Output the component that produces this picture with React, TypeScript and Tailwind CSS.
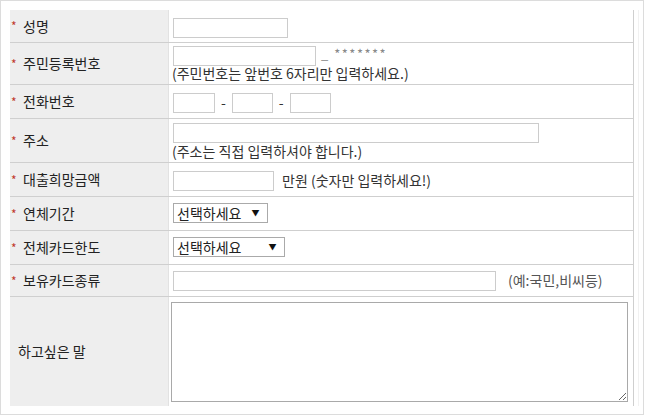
import React from "react"

const font = { fontFamily: '"Noto Sans CJK KR", "Noto Sans", sans-serif' }

type RowProps = {
  label: string
  required?: boolean
  h: string
  children: React.ReactNode
  last?: boolean
}

function Row({ label, required = true, h, children, last }: RowProps) {
  return (
    <div className={`flex ${h} ${last ? "" : "border-b border-[#cfcfcf]"}`}>
      <div className="w-[159px] shrink-0 bg-[#eeeeee] border-r border-[#e2e2e2] flex items-center pl-[1px] text-[14px] text-[#222]">
        {required ? (
          <span className="w-[6px] text-[#c0392b] text-[12px] leading-none">*</span>
        ) : (
          <span className="w-[7px]" />
        )}
        <span className={required ? "ml-[6px]" : ""}>{label}</span>
      </div>
      <div className="flex-1 min-w-0">{children}</div>
    </div>
  )
}

const inputCls = "h-[20px] border border-[#cccccc] bg-white outline-none"

function FakeSelect({ w, arrowGap }: { w: string; arrowGap: string }) {
  return (
    <div className={`${w} h-[20px] border border-[#aaaaaa] bg-white flex items-center pl-[3px] text-[14px] text-[#222]`}>
      <span>선택하세요</span>
      <span className={`${arrowGap} text-[8px] text-[#111]`}>▼</span>
    </div>
  )
}

export default function App() {
  return (
    <div style={font} className="w-[645px] h-[417px] bg-white">
      <div className="w-[644px] h-[415px] border border-[#dcdcdc] pl-[9px] pt-[9px]">
        <div className="w-[629px] border-r border-[#f1f1f1]">
          <div className="w-[624px] border-r border-[#cfcfcf]">
            <Row label="성명" h="h-[33px]">
              <div className="pl-[4px] pt-[6px]">
                <input className={`${inputCls} w-[115px]`} />
              </div>
            </Row>

            <Row label="주민등록번호" h="h-[42px]">
              <div className="pl-[4px] pt-[3px] text-[14px] text-[#333]">
                <div className="flex items-start">
                  <input className={`${inputCls} w-[143px]`} />
                  <span className="ml-[5px] text-[13px] leading-[14px] text-[#888] pt-[1px] tracking-[1.5px]">_ *******</span>
                </div>
                <div className="leading-[15px] -ml-[1px]">(주민번호는 앞번호 6자리만 입력하세요.)</div>
              </div>
            </Row>

            <Row label="전화번호" h="h-[34px]">
              <div className="pl-[4px] pt-[7px] flex items-center text-[14px] text-[#333]">
                <input className={`${inputCls} w-[42px]`} />
                <span className="mx-[6px]">-</span>
                <input className={`${inputCls} w-[41px]`} />
                <span className="mx-[6px]">-</span>
                <input className={`${inputCls} w-[41px]`} />
              </div>
            </Row>

            <Row label="주소" h="h-[44px]">
              <div className="pl-[4px] pt-[4px] text-[14px] text-[#333]">
                <input className={`${inputCls} w-[366px] block`} />
                <div className="leading-[16px] -ml-[1px]">(주소는 직접 입력하셔야 합니다.)</div>
              </div>
            </Row>

            <Row label="대출희망금액" h="h-[34px]">
              <div className="pl-[4px] pt-[7px] flex items-center text-[14px] text-[#333]">
                <input className={`${inputCls} w-[101px]`} />
                <span className="ml-[8px]">만원 (숫자만 입력하세요!)</span>
              </div>
            </Row>

            <Row label="연체기간" h="h-[34px]">
              <div className="pl-[4px] pt-[6px]">
                <FakeSelect w="w-[95px]" arrowGap="ml-[10px]" />
              </div>
            </Row>

            <Row label="전체카드한도" h="h-[34px]">
              <div className="pl-[4px] pt-[6px]">
                <FakeSelect w="w-[112px]" arrowGap="ml-[27px]" />
              </div>
            </Row>

            <Row label="보유카드종류" h="h-[32px]">
              <div className="pl-[4px] pt-[5px] flex items-center text-[14px] text-[#555]">
                <input className={`${inputCls} w-[323px]`} />
                <span className="ml-[12px]">(예:국민,비씨등)</span>
              </div>
            </Row>

            <Row label="하고싶은 말" required={false} h="h-[109px]" last>
              <div className="pl-[2px] pt-[5px]">
                <textarea className="block w-[457px] h-[100px] border border-[#a9a9a9] bg-white outline-none resize" />
              </div>
            </Row>
          </div>
        </div>
      </div>
    </div>
  )
}
